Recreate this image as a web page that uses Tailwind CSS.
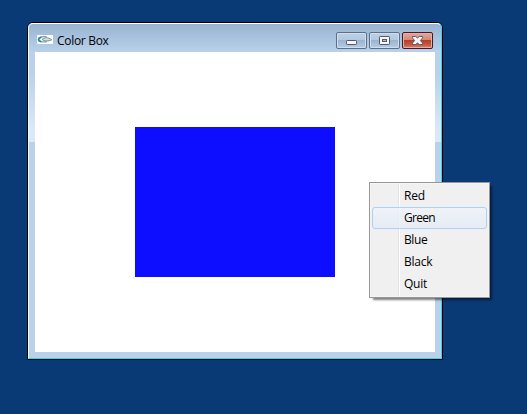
<!DOCTYPE html>
<html lang="en">
<head>
<meta charset="utf-8">
<title>Color Box</title>
<script src="https://cdn.jsdelivr.net/npm/@tailwindcss/browser@4"></script>
</head>
<body class="relative h-[414px] w-[527px] overflow-hidden bg-[#0a3a75] font-['Open_Sans','Noto_Sans',sans-serif] text-[12px] text-black">
  <main class="absolute top-[22px] left-[27px] h-[338px] w-[416px] rounded-t-[6px] border border-black bg-[#b9d1ea]">
    <div class="flex h-full flex-col rounded-t-[5px] border border-t-white border-r-[#35d5f2] border-b-[#35d5f2] border-l-[#f5faff] bg-[linear-gradient(to_bottom,#99b4d1_0px,#b9d1ea_28px,#b9d1ea_50px,#dce8f5_105px,#dce8f5_118px,#b9d1ea_118px)] px-[6px] pb-[6px]">
      <header class="flex h-[28px] shrink-0 items-start">
        <svg class="mt-[11px] ml-[2px] h-[9px] w-[16px] shrink-0 bg-white" viewBox="0 0 16 9" fill="none">
          <path d="M10 2C6 .8 1.5 2 1.5 4.4S6 7.5 10 6.5" stroke="#8ba8b0" stroke-width="1.3"/>
          <path d="M4.5 2.2C.6 3.2.6 5.7 4.5 6.7" stroke="#238c91" stroke-width="1.7"/>
          <path d="M5 4.5C7 2.2 11 2 14.8 4.8C11 6.4 8 6.5 5 4.5Z" fill="#d5dfe2" stroke="#76939f" stroke-width="1"/>
        </svg>
        <h1 class="mt-[9px] ml-[4px] leading-[16px] tracking-[-0.3px]">Color Box</h1>
        <div class="mt-[8px] mr-[2px] ml-auto flex gap-[2px]">
          <button aria-label="Minimize" class="h-[17px] w-[31px] rounded-[2px] border border-[#5e6e85] bg-[linear-gradient(#bdd0e5_0%,#b3c8df_47%,#9bb5d1_50%,#b4cce5_100%)] shadow-[inset_0_0_0_1px_#d0dfef]">
            <svg class="block h-[15px] w-[29px]" viewBox="0 0 29 15"><rect x="9.5" y="7.5" width="10" height="4" rx=".7" fill="#f5f5f5" stroke="#53586a"/></svg>
          </button>
          <button aria-label="Maximize" class="h-[17px] w-[31px] rounded-[2px] border border-[#5e6e85] bg-[linear-gradient(#bdd0e5_0%,#b3c8df_47%,#9bb5d1_50%,#b4cce5_100%)] shadow-[inset_0_0_0_1px_#d0dfef]">
            <svg class="block h-[15px] w-[29px]" viewBox="0 0 29 15"><rect x="9.5" y="3.5" width="10" height="8" rx=".7" fill="#f5f5f5" stroke="#53586a"/><rect x="12.5" y="6.5" width="4" height="2" fill="#a9c0da" stroke="#53586a"/></svg>
          </button>
          <button aria-label="Close" class="h-[17px] w-[31px] rounded-[2px] border border-[#4b1528] bg-[linear-gradient(#e4a79c_0%,#d38675_47%,#bb3e26_50%,#c65a42_80%,#d58a72_100%)] shadow-[inset_0_0_0_1px_#e6ada2]">
            <svg class="block h-[15px] w-[29px]" viewBox="0 0 29 15"><path d="M9.5 3.5H12.7L14.5 5L16.3 3.5H19.5V4.7L17.4 7.5L19.5 10.3V11.5H16.3L14.5 10L12.7 11.5H9.5V10.3L11.6 7.5L9.5 4.7Z" fill="#f5f5f5" stroke="#53586a" stroke-linejoin="round"/><path d="M11 4.5L18 10.5M18 4.5L11 10.5" stroke="#f5f5f5" stroke-width="2"/></svg>
          </button>
        </div>
      </header>
      <section class="flex min-h-0 flex-1 items-center justify-center bg-white">
        <div class="h-[150px] w-[200px] bg-[#0d0dff]"></div>
      </section>
    </div>
  </main>
  <menu class="absolute top-[182px] left-[369px] flex h-[116px] w-[121px] flex-col border border-[#979797] bg-[linear-gradient(to_right,transparent_28px,#e2e3e3_28px,#e2e3e3_29px,white_29px,white_30px,transparent_30px)] bg-[#f0f0f0] p-[2px] tracking-[-0.25px] shadow-[3px_3px_2px_-1px_rgba(0,0,0,0.5),inset_0_0_0_1px_#f5f5f5]">
    <li class="h-[22px] pl-[32px] leading-[22px]">Red</li>
    <li class="h-[22px] rounded-[3px] border border-[#aecff7] bg-[linear-gradient(#eff2f7d9,#e5ecf5d9)] pl-[31px] leading-[20px] tracking-[-0.7px]">Green</li>
    <li class="h-[22px] pl-[32px] leading-[22px] tracking-[-0.4px]">Blue</li>
    <li class="h-[22px] pl-[32px] leading-[22px]">Black</li>
    <li class="h-[22px] pl-[32px] leading-[22px]">Quit</li>
  </menu>
</body>
</html>
